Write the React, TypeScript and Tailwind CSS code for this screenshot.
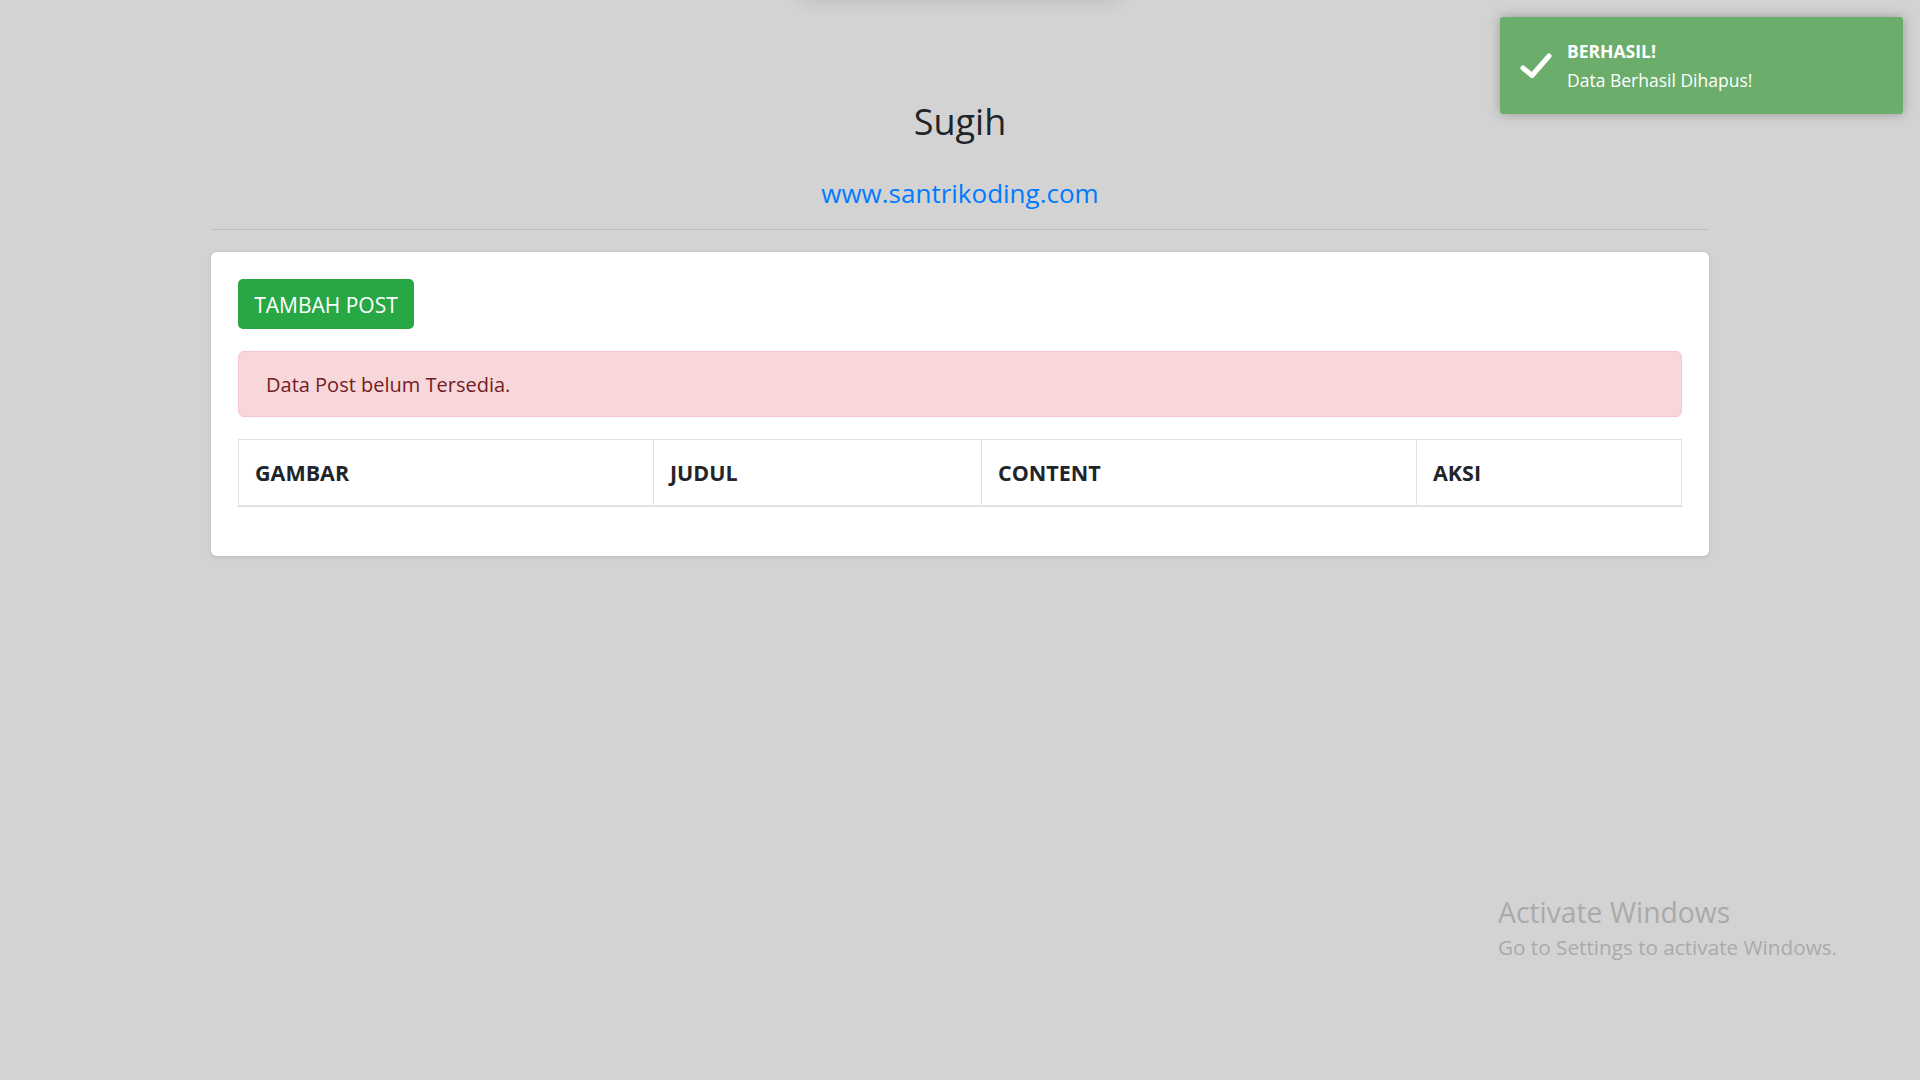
import { useState } from 'react';

interface Toast {
  title: string;
  message: string;
}

const columns = [
  { key: 'gambar', label: 'GAMBAR', width: 'w-[415px]' },
  { key: 'judul', label: 'JUDUL', width: 'w-[328px]' },
  { key: 'content', label: 'CONTENT', width: 'w-[435px]' },
  { key: 'aksi', label: 'AKSI', width: '' },
];

const CheckIcon = () => (
  <svg width="38" height="30" viewBox="0 0 38 30" fill="none">
    <polyline
      points="7,17 16,24.5 33,5"
      stroke="white"
      strokeWidth="5"
      strokeLinecap="round"
      strokeLinejoin="round"
    />
  </svg>
);

const App = () => {
  const [posts] = useState<string[]>([]);
  const [toast] = useState<Toast | null>({
    title: 'BERHASIL!',
    message: 'Data Berhasil Dihapus!',
  });

  return (
    <div className="relative min-h-screen overflow-hidden bg-[#d3d3d3] font-['Open_Sans',sans-serif] text-[#212529]">
      {/* faint shadow of something above the viewport */}
      <div className="absolute left-[800px] top-[-60px] h-[60px] w-[320px] rounded-md bg-[#d3d3d3] shadow-[0_0_18px_rgba(0,0,0,0.12)]" />

      <div className="mx-auto w-[1498px] pt-[100px]">
        <h3 className="text-center text-[36px] leading-[43px]">Sugih</h3>
        <h5 className="mt-[34px] text-center text-[26px] leading-[32px]">
          <a href="#" className="text-[#007bff]">www.santrikoding.com</a>
        </h5>
        <div className="mt-[20px] h-px bg-[#bebebe]" />

        {/* Card */}
        <div className="mt-[22px] rounded-[6px] bg-white px-[27px] pb-[49px] pt-[27px] shadow-[0_1px_4px_rgba(0,0,0,0.12)]">
          <button className="flex h-[50px] w-[176px] items-center justify-center rounded-[5px] bg-[#28a745] pt-[3px] text-[21px] text-white">
            TAMBAH POST
          </button>

          {posts.length === 0 && (
            <div className="mt-[22px] flex h-[66px] items-center rounded-[6px] border border-[#f5c6cb] bg-[#f8d7da] pl-[27px] pt-[1px] text-[20px] text-[#721c24]">
              Data Post belum Tersedia.
            </div>
          )}

          <table className="mt-[22px] w-full table-fixed border-collapse">
            <thead>
              <tr>
                {columns.map((col) => (
                  <th
                    key={col.key}
                    className={`${col.width} h-[66px] border border-b-2 border-[#dee2e6] pl-[16px] pt-[2px] text-left align-middle text-[21.5px] font-bold`}
                  >
                    {col.label}
                  </th>
                ))}
              </tr>
            </thead>
            <tbody>
              {posts.map((post) => (
                <tr key={post}>
                  <td className="border border-[#dee2e6] p-4">{post}</td>
                </tr>
              ))}
            </tbody>
          </table>
        </div>
      </div>

      {/* Toast */}
      {toast && (
        <div className="absolute right-[17px] top-[17px] flex h-[97px] w-[403px] items-center rounded-[3px] bg-[#6bad6b] pl-[67px] text-[17.5px] leading-[29px] text-white shadow-[0_0_12px_#999]">
          <div className="absolute left-[16px] top-[34px]">
            <CheckIcon />
          </div>
          <div>
            <div className="font-bold">{toast.title}</div>
            <div>{toast.message}</div>
          </div>
        </div>
      )}

      {/* Windows watermark */}
      <div className="pointer-events-none absolute left-[1498px] top-[895px] text-[#aaaaaa]">
        <div className="text-[28.3px] leading-[34px]">Activate Windows</div>
        <div className="mt-[5px] text-[20.7px] leading-[26px]">Go to Settings to activate Windows.</div>
      </div>
    </div>
  );
};

export default App;
